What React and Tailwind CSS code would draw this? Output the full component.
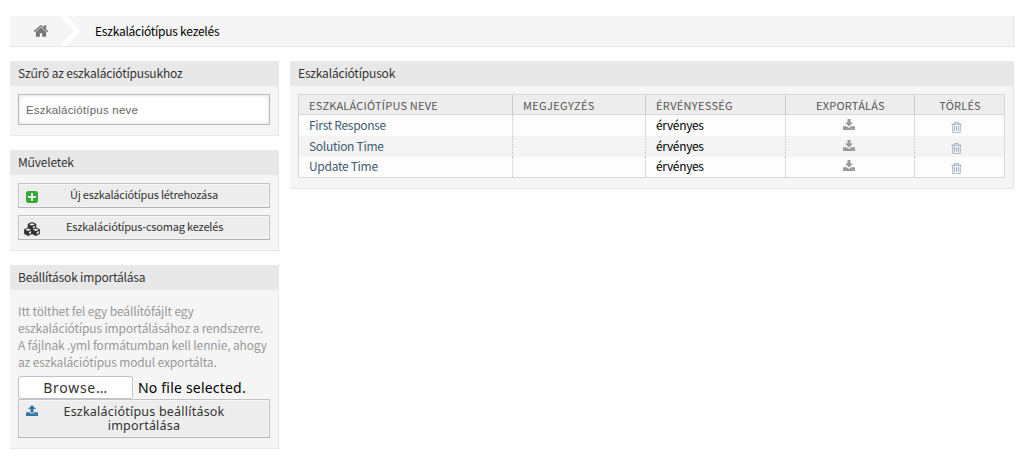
import React from "react";

const SANS = "font-['Noto_Sans_CJK_SC','Open_Sans',sans-serif]";

const PATHS = {
  home: "M1472 992v480q0 26-19 45t-45 19h-384v-384h-256v384h-384q-26 0-45-19t-19-45v-480q0-1 .5-3t.5-3l575-474 575 474q1 2 1 6zm223-69l-62 74q-8 9-21 11h-3q-13 0-21-7l-692-577-692 577q-12 8-24 7-13-2-21-11l-62-74q-8-10-7-23.5t11-21.5l719-599q32-26 76-26t76 26l244 204v-195q0-14 9-23t23-9h192q14 0 23 9t9 23v408l219 182q10 8 11 21.5t-7 23.5z",
  trash: "M704 736v576q0 14-9 23t-23 9h-64q-14 0-23-9t-9-23v-576q0-14 9-23t23-9h64q14 0 23 9t9 23zm256 0v576q0 14-9 23t-23 9h-64q-14 0-23-9t-9-23v-576q0-14 9-23t23-9h64q14 0 23 9t9 23zm256 0v576q0 14-9 23t-23 9h-64q-14 0-23-9t-9-23v-576q0-14 9-23t23-9h64q14 0 23 9t9 23zm128 724v-948h-896v948q0 22 7 40.5t14.5 27 10.5 8.5h832q3 0 10.5-8.5t14.5-27 7-40.5zm-672-1076h448l-48-117q-7-9-17-11h-317q-10 2-17 11zm928 32v64q0 14-9 23t-23 9h-96v948q0 83-47 143.5t-113 60.5h-832q-66 0-113-58.5t-47-141.5v-952h-96q-14 0-23-9t-9-23v-64q0-14 9-23t23-9h309l70-167q15-37 54-63t79-26h320q40 0 79 26t54 63l70 167h309q14 0 23 9t9 23z",
  plus: "M1408 960v-128q0-26-19-45t-45-19h-320v-320q0-26-19-45t-45-19h-128q-26 0-45 19t-19 45v320h-320q-26 0-45 19t-19 45v128q0 26 19 45t45 19h320v320q0 26 19 45t45 19h128q26 0 45-19t19-45v-320h320q26 0 45-19t19-45zm256-544v960q0 119-84.5 203.5t-203.5 84.5h-960q-119 0-203.5-84.5t-84.5-203.5v-960q0-119 84.5-203.5t203.5-84.5h960q119 0 203.5 84.5t84.5 203.5z",
};

function Icon({ name, className }) {
  return (
    <svg viewBox="0 0 1792 1792" fill="currentColor" className={"shrink-0 overflow-visible " + className}>
      <path d={PATHS[name]} />
    </svg>
  );
}

function DownloadIcon({ className }) {
  return (
    <svg viewBox="0 0 12 11" fill="currentColor" className={"h-[11px] w-3 shrink-0 " + className}>
      <path d="M4.5 0h3v3.4H10L6 7.4 2 3.4h2.5Z" />
      <path d="M.6 7.2H3.8L5.2 8.5Q6 9 6.8 8.5L8.2 7.2h3.2q.6 0 .6.6v2.6q0 .6-.6.6H.6Q0 11 0 10.400V7.800Q0 7.200.6 7.200Z" />
      <path d="M8 9.200h.8v.8H8zM9.800 9.200h.8v.8h-.8z" fill="#fff" opacity=".45" />
    </svg>
  );
}

function UploadIcon({ className }) {
  return (
    <svg viewBox="0 0 12 11" fill="currentColor" className={"h-[11px] w-3 shrink-0 " + className}>
      <path d="M6 0 10 4H7.500V7.500h-3V4H2Z" />
      <path d="M.6 7.200H3.700Q4 8.500 5 8.500H7Q8 8.500 8.300 7.200h3.100q.6 0 .6.6v2.600q0 .6-.6.6H.6Q0 11 0 10.400V7.800Q0 7.200.6 7.200Z" />
      <path d="M8 9.200h.8v.8H8zM9.800 9.200h.8v.8h-.8z" fill="#fff" opacity=".45" />
    </svg>
  );
}

function Cube({ x, y }) {
  return (
    <g transform={`translate(${x} ${y})`}>
      <path d="M4 0 8 1.7V6L4 8 0 6V1.7Z" fill="#333" stroke="#333" strokeWidth=".5" strokeLinejoin="round" />
      <path d="M4 .9 6.9 2.1 4 3.3 1.1 2.1Z" fill="#ededed" />
      <path d="M4.9 4.4 7 3.4V5.2L4.9 6.5Z" fill="#ededed" />
    </g>
  );
}

function CubesIcon({ className }) {
  return (
    <svg viewBox="0 0 16 14" className={"shrink-0 " + className}>
      <Cube x={4} y={0.3} />
      <Cube x={0.2} y={5.7} />
      <Cube x={7.8} y={5.7} />
    </svg>
  );
}

function Widget({ title, children, className = "" }) {
  return (
    <section className={"border-r border-b border-[#e6e6e6] bg-[#f5f5f5] " + className}>
      <h2 className="h-[25px] bg-[#e8e8e8] pl-2 text-[12px] leading-[23px] tracking-[-0.19px] whitespace-nowrap text-[#333]">{title}</h2>
      {children}
    </section>
  );
}

const BUTTON = "flex w-full border border-[#c4c4c4] border-b-[#b4b4b4] bg-[#ededed] pl-[7px] text-[#333] shadow-[inset_0_0_0_1px_#f5f5f5]";

const ROWS = [
  { name: "First Response", height: "h-[21px]", leading: "leading-[20px]", bg: "bg-[#fdfdfd]", trash: "mt-[6px]", download: "mt-1" },
  { name: "Solution Time", height: "h-[21px]", leading: "leading-[20px]", bg: "bg-[#f4f4f4]", trash: "mt-[6px]", download: "mt-1" },
  { name: "Update Time", height: "h-5", leading: "leading-[18px]", bg: "bg-[#fdfdfd]", trash: "mt-[5px]", download: "mt-[3px]" },
];

const COLS = "grid grid-cols-[214px_133px_140px_129px_90px]";
const HEAD = "border-r border-[#ccc] pl-2.5";
const CELL = "border-r border-dotted border-[#c4c4c4]";

export default function App() {
  return (
    <div className={"h-[469px] w-[1025px] overflow-hidden bg-white px-2.5 pt-4 " + SANS}>
      <nav className="flex h-[31px] w-[1004px] items-center border-r border-b border-[#e6e6e6] bg-[#f5f5f5]">
        <Icon name="home" className="ml-[23px] size-4 text-[#777]" />
        <svg viewBox="0 0 20 30" className="ml-[11px] h-[30px] w-5" fill="none" stroke="white" strokeWidth="5">
          <path d="M1-2 17 15 1 32" />
        </svg>
        <span className="ml-[15px] text-[12px] leading-[30px] tracking-[-0.25px] text-black">Eszkalációtípus kezelés</span>
      </nav>

      <div className="mt-3.5 flex items-start gap-[11px]">
        <aside className="flex w-[269px] flex-col gap-3.5">
          <Widget title="Szűrő az eszkalációtípusukhoz" className="h-[75px]">
            <div className="px-2 pt-2">
              <input
                placeholder="Eszkalációtípus neve"
                className="block h-[31px] w-[252px] border border-[#bbb] bg-white px-[7px] font-['Liberation_Sans',sans-serif] text-[11.5px] tracking-[0.2px] shadow-[inset_0_0_4px_#ddd] placeholder:text-[#666]"
              />
            </div>
          </Widget>

          <Widget title="Műveletek" className="h-[101px]">
            <div className="flex flex-col gap-[7px] px-2 pt-2 text-[11px] tracking-[-0.2px]">
              <button className={BUTTON + " h-[25px] items-center"}>
                <Icon name="plus" className="mt-0.5 -ml-px size-[14px] text-[#3a3]" />
                <span className="mb-0.5 ml-[31px] leading-none">Új eszkalációtípus létrehozása</span>
              </button>
              <button className={BUTTON + " h-[25px] items-center"}>
                <CubesIcon className="-ml-0.5 mt-0.5 h-3.5 w-4" />
                <span className="mb-0.5 ml-[26px] leading-none">Eszkalációtípus-csomag kezelés</span>
              </button>
            </div>
          </Widget>

          <Widget title="Beállítások importálása" className="h-[184px]">
            <div className="px-2 pt-3">
              <p className="text-[12px] leading-[17px] tracking-[-0.14px] whitespace-nowrap text-[#999]">
                Itt tölthet fel egy beállítófájlt egy<br />
                eszkalációtípus importálásához a rendszerre.<br />
                A fájlnak .yml formátumban kell lennie, ahogy<br />
                az eszkalációtípus modul exportálta.
              </p>
              <div className="mt-1.5 flex items-center font-['Noto_Sans',sans-serif] text-[14px]">
                <button className="h-[23px] w-[115px] rounded-[3px] border border-[#bfc3cc] bg-white leading-[20px] tracking-[0.7px] text-[#333]">Browse…</button>
                <span className="ml-[5px] leading-[22px] tracking-[0.2px] whitespace-nowrap text-black">No file selected.</span>
              </div>
              <button className={BUTTON + " h-[39px] items-start font-['Noto_Sans',sans-serif]"}>
                <UploadIcon className="mt-[5px] text-[#2f74a5]" />
                <span className="mt-[5px] ml-[25px] flex w-[162px] flex-col text-center text-[12.5px] leading-[14px] tracking-[0.22px] whitespace-nowrap">
                  <span>Eszkalációtípus beállítások</span>
                  <span>importálása</span>
                </span>
              </button>
            </div>
          </Widget>
        </aside>

        <main className="w-[724px]">
          <Widget title="Eszkalációtípusok" className="h-32">
            <div className="mx-2 mt-2 w-[707px] border border-[#d8d8d8]">
              <div className={COLS + " h-5 border-b border-[#d8d8d8] bg-[#ededed] text-[11px] leading-[21px] tracking-[0.2px] whitespace-nowrap text-[#555]"}>
                <div className={HEAD}>ESZKALÁCIÓTÍPUS NEVE</div>
                <div className={HEAD + " tracking-[0.35px]"}>MEGJEGYZÉS</div>
                <div className={HEAD + " tracking-[0.3px]"}>ÉRVÉNYESSÉG</div>
                <div className="border-r border-[#ccc] pl-px text-center">EXPORTÁLÁS</div>
                <div className="text-center">TÖRLÉS</div>
              </div>
              {ROWS.map((row) => (
                <div key={row.name} className={COLS + " text-[12px] tracking-[-0.33px] whitespace-nowrap " + row.height + " " + row.leading + " " + row.bg}>
                  <div className={CELL + " pl-2.5 tracking-[-0.3px] text-[#3d5a70]"}>{row.name}</div>
                  <div className={CELL} />
                  <div className={CELL + " pl-2.5 text-black"}>érvényes</div>
                  <div className={CELL + " flex justify-center"}>
                    <DownloadIcon className={"mr-0.5 text-[#999] " + row.download} />
                  </div>
                  <div className="flex justify-center">
                    <Icon name="trash" className={"mr-[7px] size-[13px] text-[#9aa9bf] " + row.trash} />
                  </div>
                </div>
              ))}
            </div>
          </Widget>
        </main>
      </div>
    </div>
  );
}
